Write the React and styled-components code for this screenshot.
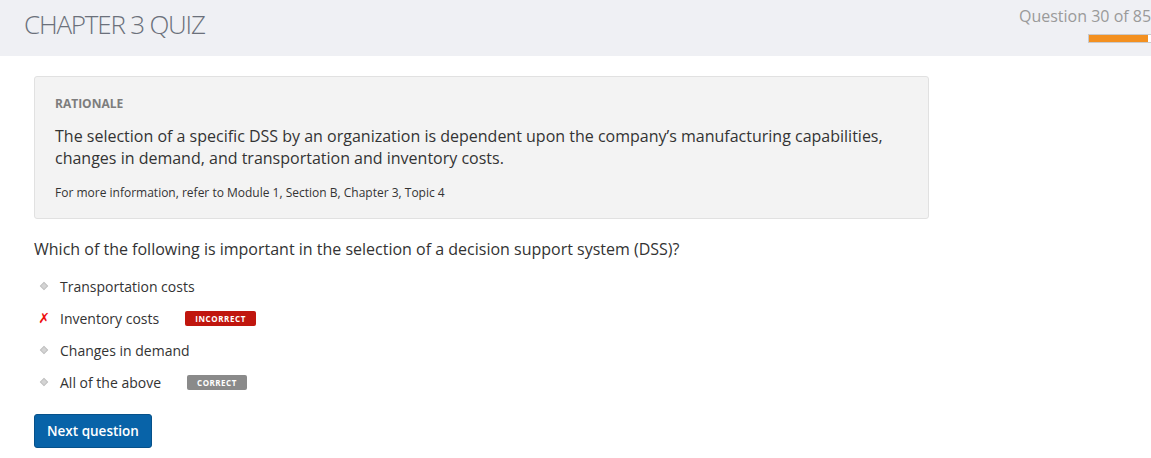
import React from 'react';
import styled, { createGlobalStyle } from 'styled-components';

const GlobalStyle = createGlobalStyle`
  html, body {
    margin: 0;
    padding: 0;
    background: #ffffff;
    font-family: "Open Sans", "Noto Sans", sans-serif;
    color: #333333;
    overflow: hidden;
  }
`;

const Header = styled.header`
  height: 56px;
  background: #eff0f4;
  display: flex;
  justify-content: space-between;
  align-items: flex-start;
  overflow: hidden;
`;

const Title = styled.h1`
  margin: 0;
  padding: 7px 0 0 24px;
  font-size: 26px;
  font-weight: 300;
  line-height: 34px;
  color: #6b707b;
  letter-spacing: -1.2px;
`;

const Progress = styled.div`
  flex: 0 0 auto;
  width: 150px;
  margin-right: -18px;
  padding-top: 5px;
  display: flex;
  flex-direction: column;
  align-items: flex-start;
`;

const ProgressLabel = styled.div`
  font-size: 16px;
  line-height: 22px;
  color: #9a9a9a;
  white-space: nowrap;
`;

const Track = styled.div`
  margin: 7px 0 0 69px;
  width: 80px;
  height: 7px;
  border: 1px solid #c9cacc;
  background: #ffffff;
  display: flex;
`;

const Fill = styled.div`
  height: 100%;
  background: #f39020;
`;

const Main = styled.main`
  padding: 20px 34px 0 34px;
`;

const Rationale = styled.section`
  width: 895px;
  box-sizing: border-box;
  background: #f3f3f3;
  border: 1px solid #e1e1e1;
  border-radius: 3px;
  padding: 19px 20px 17px 20px;
`;

const Label = styled.div`
  font-size: 12px;
  font-weight: 700;
  color: #7d7d7d;
  line-height: 16px;
`;

const Body = styled.p`
  margin: 13px 0 0 0;
  font-size: 16px;
  line-height: 22px;
  color: #333333;
`;

const Note = styled.p`
  margin: 16px 0 0 0;
  font-size: 12px;
  line-height: 16px;
  color: #333333;
`;

const Question = styled.p`
  margin: 19px 0 0 0;
  font-size: 16px;
  line-height: 22px;
  color: #333333;
`;

const Options = styled.ul`
  list-style: none;
  margin: 16px 0 0 0;
  padding: 0;
  display: flex;
  flex-direction: column;
  gap: 12px;
`;

const Option = styled.li`
  display: flex;
  align-items: center;
  height: 20px;
  font-size: 14px;
  color: #333333;
`;

const Marker = styled.span`
  width: 26px;
  display: flex;
  justify-content: center;
  align-items: center;
`;

const Diamond = styled.span`
  display: block;
  width: 4px;
  height: 4px;
  background: #d4d4d4;
  border: 0.5px solid #c4c4c4;
  transform: rotate(45deg);
  margin-left: -6px;
`;

const Cross = styled.span`
  color: #ee0f0f;
  font-weight: 700;
  font-style: italic;
  font-size: 14px;
  margin-left: -6px;
  font-family: "DejaVu Sans", sans-serif;
`;

const Text = styled.span`
  margin-right: ${p => p.$gap || 0}px;
`;

const Badge = styled.span`
  display: inline-block;
  font-size: 8px;
  font-weight: 700;
  letter-spacing: ${p => (p.$wrong ? 0.6 : 0.5)}px;
  color: #ffffff;
  background: ${p => (p.$wrong ? '#c0160e' : '#8a8a8a')};
  padding: 0 10px;
  height: 15px;
  line-height: 15px;
  border-radius: 2px;
`;

const Button = styled.button`
  margin-top: 22px;
  background: #0863a8;
  border: 1px solid #06518a;
  border-radius: 3px;
  color: #ffffff;
  font-family: inherit;
  font-size: 13.5px;
  font-weight: 600;
  height: 34px;
  padding: 0 12px;
  cursor: pointer;
`;

const options = [
  { text: 'Transportation costs' },
  { text: 'Inventory costs', wrong: true, badge: 'INCORRECT', gap: 26 },
  { text: 'Changes in demand' },
  { text: 'All of the above', badge: 'CORRECT', gap: 26 },
];

export default function App() {
  const done = 30;
  const total = 85;
  return (
    <>
      <GlobalStyle />
      <Header>
        <Title>CHAPTER 3 QUIZ</Title>
        <Progress>
          <ProgressLabel>Question {done} of {total}</ProgressLabel>
          <Track>
            <Fill style={{ width: `${Math.round((done / total) * 100 * 2.1)}%` }} />
          </Track>
        </Progress>
      </Header>
      <Main>
        <Rationale>
          <Label>RATIONALE</Label>
          <Body>
            The selection of a specific DSS by an organization is dependent upon the company’s manufacturing capabilities,
            <br />
            changes in demand, and transportation and inventory costs.
          </Body>
          <Note>For more information, refer to Module 1, Section B, Chapter 3, Topic 4</Note>
        </Rationale>
        <Question>Which of the following is important in the selection of a decision support system (DSS)?</Question>
        <Options>
          {options.map(o => (
            <Option key={o.text}>
              <Marker>{o.wrong ? <Cross>✗</Cross> : <Diamond />}</Marker>
              <Text $gap={o.gap}>{o.text}</Text>
              {o.badge && <Badge $wrong={o.wrong}>{o.badge}</Badge>}
            </Option>
          ))}
        </Options>
        <Button>Next question</Button>
      </Main>
    </>
  );
}
